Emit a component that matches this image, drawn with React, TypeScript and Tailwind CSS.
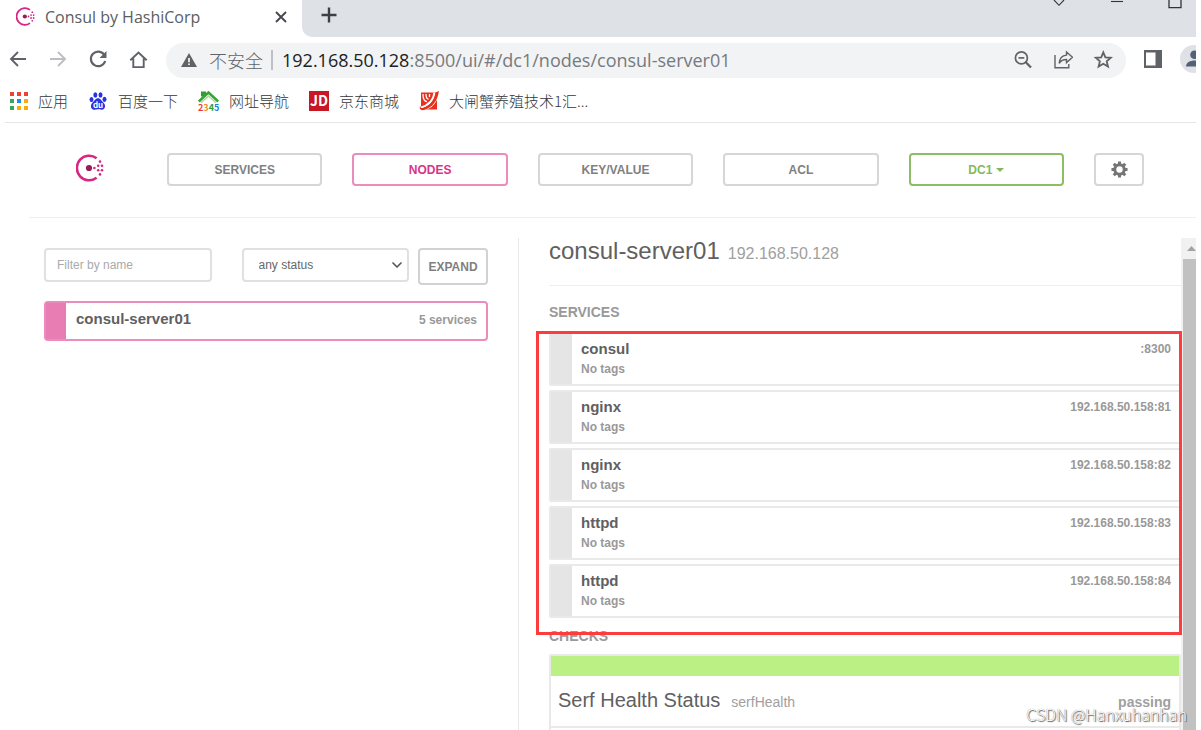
import { useState } from 'react'
import { ChevronDown } from 'lucide-react'

const services = [
    { name: 'consul', address: ':8300' },
    { name: 'nginx', address: '192.168.50.158:81' },
    { name: 'nginx', address: '192.168.50.158:82' },
    { name: 'httpd', address: '192.168.50.158:83' },
    { name: 'httpd', address: '192.168.50.158:84' },
]

const tabs = ['SERVICES', 'NODES', 'KEY/VALUE', 'ACL']

const ConsulLogo = ({ className }: { className?: string }) => (
    <svg viewBox="0 0 28 28" className={className} aria-hidden="true">
        <path d="M20.6 4.2A12.3 12.3 0 1 0 20.6 23.8" fill="none" stroke="#d62783" strokeWidth="2.6" />
        <circle cx="13" cy="14" r="3.1" fill="#961d59" />
        <g fill="#d62783">
            <circle cx="18.4" cy="14" r="1.3" />
            <circle cx="22.2" cy="11.8" r="1.3" />
            <circle cx="22.2" cy="16.2" r="1.3" />
            <circle cx="26" cy="11.8" r="1.3" />
            <circle cx="26" cy="16.2" r="1.3" />
            <circle cx="24" cy="7.6" r="1.3" />
            <circle cx="24" cy="20.4" r="1.3" />
        </g>
    </svg>
)

const TabStrip = () => (
    <div className="flex h-[37px] bg-[#dee1e6]">
        <div className="flex h-full w-[302px] items-center bg-white pb-1 pl-4">
            <ConsulLogo className="size-[19px]" />
            <span className="ml-[10px] flex-1 text-[16px] leading-6 text-[#5a5d61]">Consul by HashiCorp</span>
            <button aria-label="Close tab" className="mr-[14px]">
                <svg viewBox="0 0 14 14" className="size-[14px]" stroke="#45494d" strokeWidth="1.9">
                    <path d="M2 2l10 10M12 2L2 12" />
                </svg>
            </button>
        </div>
        <div className="flex-1 bg-white">
            <div className="flex h-full items-start justify-between rounded-bl-[10px] bg-[#dee1e6] pl-[19px] pr-[14px]">
                <button aria-label="New tab" className="pt-[7px]">
                    <svg viewBox="0 0 16 16" className="size-4" stroke="#3c4043" strokeWidth="2.4">
                        <path d="M8 0.5v15M0.5 8h15" />
                    </svg>
                </button>
                <div className="flex gap-[44px]">
                    <svg viewBox="0 0 14 9" className="h-[9px] w-[14px]" fill="none" stroke="#333" strokeWidth="1.1">
                        <path d="M2 0l5 5.3L12 0" />
                    </svg>
                    <svg viewBox="0 0 14 9" className="h-[9px] w-[14px]" stroke="#333" strokeWidth="1.1">
                        <path d="M1 1.5h12" />
                    </svg>
                    <svg viewBox="0 0 14 9" className="h-[9px] w-[14px]" fill="none" stroke="#333" strokeWidth="1.3">
                        <path d="M1 0v7.6h12V0" />
                    </svg>
                </div>
            </div>
        </div>
    </div>
)

const Toolbar = () => (
    <div className="flex h-[46px] items-center pl-2">
        <div className="flex gap-5">
            <button aria-label="Back">
                <svg viewBox="0 0 20 20" className="size-5" fill="none" stroke="#5f6368" strokeWidth="1.9">
                    <path d="M18 9H3.5M10 2L3 9l7 7" />
                </svg>
            </button>
            <button aria-label="Forward">
                <svg viewBox="0 0 20 20" className="size-5" fill="none" stroke="#bcbec1" strokeWidth="1.9">
                    <path d="M2 9h14.500M10 2l7 7-7 7" />
                </svg>
            </button>
            <button aria-label="Reload">
                <svg viewBox="0 0 20 20" className="size-5" fill="none" stroke="#5f6368" strokeWidth="2.2">
                    <path d="M16.400 5A7.300 7.300 0 1 0 17.200 11" />
                    <path d="M18.500 1v7h-7z" fill="#5f6368" stroke="none" />
                </svg>
            </button>
            <button aria-label="Home">
                <svg viewBox="0 0 20 20" className="size-5" fill="none" stroke="#5f6368" strokeWidth="1.9">
                    <path d="M2.300 10.300L10.500 2.500l8.200 7.800M5.300 8.500v8.600h10.400V8.500" />
                </svg>
            </button>
        </div>
        <div className="ml-[18px] flex h-[35px] flex-1 items-center rounded-full bg-[#f1f3f4] pl-[15px] pr-[13px]">
            <svg viewBox="0 0 16 14" className="h-[14px] w-4">
                <path d="M8 0l8 14H0z" fill="#5f6368" />
                <path d="M7.200 5h1.600v4.300H7.200zM7.200 10.500h1.600v1.600H7.200z" fill="#fff" />
            </svg>
            <span className="ml-3 text-[18px] font-light leading-8 text-[#5f6368] font-['Noto_Sans_CJK_SC',sans-serif]">不安全</span>
            <span className="ml-2 mr-[9px] h-5 w-[2px] bg-[#bdc1c6]" />
            <div className="flex-1 text-[18px] leading-8 text-[#777a7e]">
                <span className="text-[#202124]">192.168.50.128</span>:8500/ui/#/dc1/nodes/consul-server01
            </div>
            <div className="flex gap-5">
                <button aria-label="Zoom">
                    <svg viewBox="0 0 20 20" className="size-5" fill="none" stroke="#5f6368" strokeWidth="1.700">
                        <circle cx="8.400" cy="7.900" r="6" />
                        <path d="M5.500 7.900h5.800" />
                        <path d="M12.800 12.300l5.200 5.200" strokeWidth="2.300" />
                    </svg>
                </button>
                <button aria-label="Share">
                    <svg viewBox="0 0 20 20" className="size-5" fill="none" stroke="#5f6368" strokeWidth="1.400">
                        <path d="M2 5v12.700h13.800V14" />
                        <path d="M13.500 2l6 5.300-6 5.300V9.500c-4 0-5.500 1-7.300 3.800.3-4.500 2.300-7.700 7.300-8.200z" />
                    </svg>
                </button>
                <button aria-label="Bookmark">
                    <svg viewBox="0 0 20 20" className="size-5" fill="none" stroke="#5f6368" strokeWidth="1.800">
                        <path d="M10.300 2.300l2.100 5 5.400.5-4.100 3.500 1.300 5.300-4.700-2.800-4.700 2.800 1.300-5.300-4.100-3.500 5.400-.5z" />
                    </svg>
                </button>
            </div>
        </div>
        <button aria-label="Side panel" className="mb-[2px] ml-[18px]">
            <svg viewBox="0 0 18 18" className="size-[18px]">
                <path d="M0 0h18v18H0z" fill="#5f6368" />
                <path d="M2 2.500h9.500v13H2z" fill="#fff" />
            </svg>
        </button>
        <button aria-label="Profile" className="mb-[2px] ml-[18px] w-4 overflow-hidden">
            <svg viewBox="0 0 28 28" className="size-7 max-w-none">
                <circle cx="14" cy="14" r="14" fill="#dee1e6" />
                <circle cx="14.500" cy="9.800" r="4.300" fill="#556078" />
                <path d="M6 21.500c0-8 17-8 17 0z" fill="#556078" />
            </svg>
        </button>
    </div>
)

const AppsIcon = () => (
    <svg viewBox="0 0 18 18" className="size-[18px]">
        <path d="M0 0h4v4H0zM7 0h4v4H7zM14 0h4v4h-4z" fill="#ea4335" />
        <path d="M0 7h4v4H0zM0 14h4v4H0z" fill="#34a853" />
        <path d="M7 7h4v4H7z" fill="#1a8cf0" />
        <path d="M14 7h4v4h-4zM7 14h4v4H7zM14 14h4v4h-4z" fill="#fbab05" />
    </svg>
)

const BaiduIcon = () => (
    <svg viewBox="0 0 18 18" className="size-[18px]">
        <g fill="#2932e1">
            <ellipse cx="2.500" cy="7.500" rx="2" ry="2.600" />
            <ellipse cx="6.300" cy="3" rx="2" ry="2.700" />
            <ellipse cx="11.500" cy="3" rx="2" ry="2.700" />
            <ellipse cx="15.500" cy="7.300" rx="2" ry="2.600" />
            <path d="M9 6.300c2.600 0 3.400 2.600 5.600 4.500 2.400 2.200 1.800 6.700-1.600 6.900-1.600.1-2.500-.4-4-.4s-2.400.5-4 .4c-3.400-.2-4-4.700-1.600-6.900C5.600 8.900 6.400 6.300 9 6.300z" />
        </g>
        <text x="9" y="15.800" textAnchor="middle" fontSize="8" fontWeight="700" fill="#fff">du</text>
    </svg>
)

const NavSiteIcon = () => (
    <svg viewBox="0 0 21 20" className="h-5 w-[21px] overflow-visible">
        <path d="M3 0.500h5v5H3z" fill="#2f9e2f" />
        <path d="M0.800 10.500L10.500 1.500l9.700 9" fill="none" stroke="#35a535" strokeWidth="2.400" />
        <path d="M3 11.800L10.500 5l7.500 6.800" fill="none" stroke="#a6d8a0" strokeWidth="1.400" />
        <text x="0" y="19.500" fontSize="9" fontWeight="700" fill="#e8392c">2<tspan fill="#f58a1f">3</tspan><tspan fill="#2f9e2f">4</tspan><tspan fill="#2a7de1">5</tspan></text>
    </svg>
)

const JdIcon = () => (
    <svg viewBox="0 0 20 20" className="size-5">
        <path d="M0 0h20v20H0z" fill="#c91623" />
        <text x="10" y="15" textAnchor="middle" fontSize="14" fontWeight="600" fill="#fff">JD</text>
    </svg>
)

const CrabIcon = () => (
    <svg viewBox="0 0 20 20" className="size-5">
        <path d="M2 1.500h16V18.500H2z" fill="#e8301f" />
        <path d="M4 3c0 5 1 7.500 4 7.500M7 3c0 3 .5 5 2.500 5M10.500 3v3" fill="none" stroke="#fff" strokeWidth="1.300" />
        <path d="M15.500 1.500C15 8 11 14 1 17" fill="none" stroke="#fff" strokeWidth="2.200" />
        <path d="M19 1.500C18 11 12.500 17 4 19" fill="none" stroke="#fff" strokeWidth="1.600" />
        <path d="M20 0c-1.500 10-7 17-15 19-3.500.8-5.500-1.500-3.500-4.500-.5 2.500 1 3 3 2.300C11.500 14.300 15.500 8.500 16.500 1.500z" fill="#e8301f" />
    </svg>
)

const Bookmarks = () => (
    <nav className="flex h-[39px] items-center pb-1 pl-[10px] font-['Noto_Sans_CJK_SC',sans-serif] text-[15px] font-light leading-6 text-[#33373b]">
        <a href="#apps" className="flex items-center gap-[10px]"><AppsIcon />应用</a>
        <a href="#baidu" className="ml-[21px] flex items-center gap-[11px]"><BaiduIcon />百度一下</a>
        <a href="#nav" className="ml-5 flex items-center gap-[10px]"><NavSiteIcon />网址导航</a>
        <a href="#jd" className="ml-5 flex items-center gap-[10px]"><JdIcon />京东商城</a>
        <a href="#crab" className="ml-5 flex items-center gap-[10px]"><CrabIcon />大闸蟹养殖技术1汇...</a>
    </nav>
)

const GearIcon = () => (
    <svg viewBox="0 0 18 18" className="size-[17px]">
        <circle cx="9" cy="9" r="5" fill="none" stroke="#757575" strokeWidth="3.200" />
        <path d="M9 0.500v3M9 14.500v3M0.500 9h3M14.500 9h3M2.900 2.900l2.300 2.300M12.800 12.800l2.300 2.300M15.100 2.900l-2.300 2.300M5.200 12.800l-2.300 2.300" stroke="#757575" strokeWidth="3.200" />
    </svg>
)

const NavBar = ({ active, onSelect }: { active: string; onSelect: (tab: string) => void }) => (
    <header className="ml-6 flex h-[95px] items-center border-b border-[#efefef] pb-px pl-[47px] pr-[52px]">
        <ConsulLogo className="mb-1 mr-[63px] size-7" />
        <div className="flex flex-1 gap-[30px] text-[12px] font-bold">
            {tabs.map((tab) => (
                <button
                    key={tab}
                    onClick={() => onSelect(tab)}
                    className={`h-[33px] flex-1 rounded-[4px] border-2 ${active === tab
                        ? 'border-[#ec8bbd] text-[#d9348b]'
                        : 'border-[#d6d6d6] text-[#808080]'
                        }`}
                >
                    {tab}
                </button>
            ))}
            <button className="flex h-[33px] flex-1 items-center justify-center gap-1 rounded-[4px] border-2 border-[#8dbd66] text-[#85b85c]">
                DC1
                <svg viewBox="0 0 8 4" className="h-1 w-2"><path d="M0 0h8L4 4z" fill="#85b85c" /></svg>
            </button>
            <button aria-label="Settings" className="flex h-[33px] w-[50px] items-center justify-center rounded-[4px] border-2 border-[#d6d6d6]">
                <GearIcon />
            </button>
        </div>
    </header>
)

const NodeList = () => {
    const [filter, setFilter] = useState('')

    return (
        <section className="w-[514px] shrink-0 border-r border-[#e8e8e8] pl-[39px] pr-[30px] pt-[10px]">
            <div className="flex items-start gap-[9px] text-[12px]">
                <div className="grid flex-1 grid-cols-2 gap-[30px]">
                    <input
                        aria-label="Filter by name"
                        placeholder="Filter by name"
                        value={filter}
                        onChange={(e) => setFilter(e.target.value)}
                        className="h-[34px] min-w-0 rounded-[4px] border-2 border-[#e0e0e0] px-[11px] text-[#666] placeholder:text-[#aaa]"
                    />
                    <div className="relative">
                        <select aria-label="Status" className="h-[34px] w-full appearance-none rounded-[4px] border-2 border-[#e0e0e0] bg-white px-[15px] text-[#666]">
                            <option>any status</option>
                            <option>passing</option>
                            <option>failing</option>
                        </select>
                        <ChevronDown className="pointer-events-none absolute right-1 top-[9px] size-4 text-[#555]" strokeWidth={2.5} />
                    </div>
                </div>
                <button className="h-[37px] w-[70px] rounded-[4px] border-2 border-[#d2d2d2] font-bold text-[#808080]">EXPAND</button>
            </div>
            <a href="#consul-server01" className="mt-4 flex h-10 rounded-[4px] border-2 border-[#ec8bbd]">
                <span className="w-5 bg-[#e87db4]" />
                <span className="flex flex-1 justify-between pl-[10px] pr-[9px] leading-8">
                    <span className="text-[15px] font-bold text-[#606060]">consul-server01</span>
                    <span className="pt-px text-[12px] font-bold text-[#999]">5 services</span>
                </span>
            </a>
        </section>
    )
}

const NodeDetail = () => (
    <section className="relative min-w-0 flex-1 pl-[30px]">
        <h1 className="flex h-12 items-baseline gap-2 border-b border-[#eee] text-[24px] leading-[26px] text-[#606060]">
            consul-server01
            <small className="text-[16px] text-[#a0a0a0]">192.168.50.128</small>
        </h1>
        <h2 className="mb-[10px] mt-4 text-[14px] font-bold leading-5 text-[#999]">SERVICES</h2>
        <ul className="flex flex-col gap-1">
            {services.map((service) => (
                <li key={service.address} className="flex h-[54px] rounded-[2px] border-2 border-[#e9e9e9]">
                    <span className="w-[21px] bg-[#e5e5e5]" />
                    <div className="flex flex-1 justify-between pl-[9px] pr-2 pt-[5px] text-[12px] font-bold text-[#999]">
                        <div>
                            <div className="text-[15px] leading-5 text-[#606060]">{service.name}</div>
                            <div className="leading-5">No tags</div>
                        </div>
                        <div className="leading-5">{service.address}</div>
                    </div>
                </li>
            ))}
        </ul>
        <h2 className="my-2 text-[14px] font-bold leading-5 text-[#999]">CHECKS</h2>
        <div className="rounded-[2px] border-2 border-[#e9e9e9]">
            <div className="h-5 bg-[#bbf085]" />
            <div className="flex h-[52px] items-baseline border-b-2 border-[#e9e9e9] pl-[7px] pr-2 pt-2 text-[14px] leading-8 text-[#a0a0a0]">
                <h3 className="text-[20px] text-[#606060]">Serf Health Status</h3>
                <span className="ml-[11px] flex-1">serfHealth</span>
                <span className="font-bold">passing</span>
            </div>
            <div className="h-20" />
        </div>
        {/* Highlight around the service list */}
        <div className="pointer-events-none absolute -right-px left-[17px] top-[93px] h-[304px] border-3 border-[#fc3d3d]" />
    </section>
)

const Scrollbar = () => (
    <div className="w-[15px] shrink-0 bg-[#f1f1f1]">
        <div className="flex h-[21px] items-center justify-end">
            <svg viewBox="0 0 9 5" className="h-[5px] w-[9px]"><path d="M0 5h9L4.500 0z" fill="#a3a3a3" /></svg>
        </div>
        <div className="ml-[2px] h-full bg-[#c1c1c1]" />
    </div>
)

const App = () => {
    const [active, setActive] = useState('NODES')

    return (
        <div className="relative flex h-screen flex-col overflow-hidden bg-white pr-[5px] font-['Liberation_Sans','Noto_Sans_CJK_SC',sans-serif]">
            <div className="shrink-0 font-['Open_Sans','Noto_Sans_CJK_SC',sans-serif]">
                <TabStrip />
                <Toolbar />
                <Bookmarks />
            </div>
            <div className="ml-[5px] flex min-h-0 flex-1 flex-col border-t border-[#e3e5e8]">
                <NavBar active={active} onSelect={setActive} />
                <main className="mt-5 flex min-h-0 flex-1">
                    <NodeList />
                    <NodeDetail />
                    <Scrollbar />
                </main>
            </div>
            <div className="absolute bottom-1 right-[14px] font-['Noto_Sans_CJK_SC',sans-serif] text-[16px] font-light leading-6 text-white [text-shadow:1px_1px_1px_#555,0_0_1px_#777]">
                CSDN @Hanxuhanhan
            </div>
        </div>
    )
}

export default App
